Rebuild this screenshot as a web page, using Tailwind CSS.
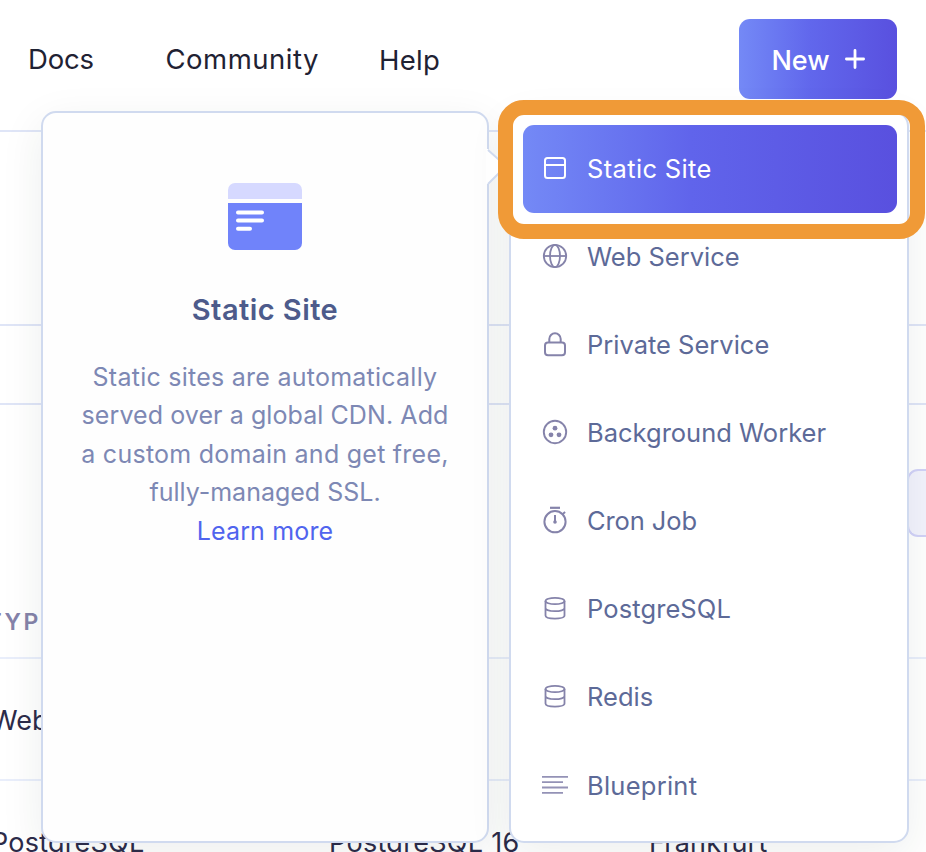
<!DOCTYPE html>
<html lang="en">
<head>
<meta charset="utf-8">
<title>Dashboard</title>
<script src="https://cdn.jsdelivr.net/npm/@tailwindcss/browser@4"></script>
</head>
<body class="relative w-[926px] h-[852px] overflow-hidden bg-white font-[Inter,sans-serif] text-[#1f2233]">
  <!-- Page behind the menu -->
  <header class="flex h-[132px] items-start border-b-2 border-[#dfe5f7] pl-7 pt-[19px]">
    <nav class="flex h-20 items-center pt-[2px] text-[27.5px] whitespace-nowrap">
      <a class="w-[137.5px] tracking-[-0.2px]">Docs</a>
      <a class="w-[213.5px] tracking-[0.5px]">Community</a>
      <a class="pt-[2px] tracking-[0.3px]">Help</a>
    </nav>
    <button class="ml-auto mr-[29px] flex h-20 w-[158px] items-center gap-[15px] rounded-[11px] bg-linear-to-r from-[#7489f6] via-[#6167ec] via-45% to-[#5950df] pl-8 pt-[4px] text-[27px] font-medium text-white">
      <span class="w-[59px] whitespace-nowrap">New</span>
      <svg class="-mt-[5px] size-5" viewBox="0 0 20 20" fill="none" stroke="currentColor" stroke-width="2.8" stroke-linecap="round"><path d="M10 1.4v17.2M1.4 10h17.2"/></svg>
    </button>
  </header>
  <main class="h-[720px] overflow-hidden">
    <div class="h-[194px] border-b-2 border-[#dfe5f7]"></div>
    <div class="h-[79px] border-b-2 border-[#dfe5f7]"></div>
    <div class="flex h-[180px] items-start justify-end pt-16">
      <div class="h-[68px] w-[19px] rounded-l-[11px] border-2 border-r-0 border-[#d2d2f8] bg-[#f3f3fd]"></div>
    </div>
    <div class="flex h-[74px] items-center border-b-2 border-[#e9eefb] pt-[3px] text-[#8583aa] text-[23px] font-semibold tracking-[2.6px]"><span class="-ml-[13.5px]">TYPE</span></div>
    <div class="flex h-[122px] items-center border-b-2 border-[#e9eefb] text-[27px] text-[#2c2b4a]"><span class="-ml-[9px] pt-1">Web Service</span></div>
    <div class="flex h-[122px] items-center text-[27px] text-[#2c2b4a] whitespace-nowrap">
      <span class="-ml-[9px] w-[338px] pt-[3px] tracking-[0.2px]">PostgreSQL</span><span class="w-[320px] pt-[3px] tracking-[0.3px]">PostgreSQL 16</span><span class="pt-[3px] tracking-[0.2px]">Frankfurt</span>
    </div>
  </main>

  <!-- Description flyout -->
  <section class="absolute left-[41px] top-[111px] flex h-[732px] w-[448px] flex-col items-center rounded-[15px] border-2 border-[#d0daef] bg-[#fefefe] pt-[70px] text-center shadow-[0_12px_44px_rgba(30,45,40,0.08)]">
    <svg class="h-[67px] w-[74px]" viewBox="0 0 74 67"><path fill="#d6d9ff" d="M0 16V7a7 7 0 0 1 7-7h60a7 7 0 0 1 7 7v9z"/><path fill="#7083fa" d="M0 20h74v40a7 7 0 0 1-7 7H7a7 7 0 0 1-7-7z"/><path stroke="#fff" stroke-width="4" stroke-linecap="round" d="M10 29.4h24M10 37.6h24M10 45.8h12"/></svg>
    <h2 class="mt-[42px] text-[29px] leading-9 font-semibold tracking-[0.45px] text-[#4d5b8b]">Static Site</h2>
    <p class="mt-[29.5px] text-[25px] leading-[38.5px] text-[#7d88b4] whitespace-nowrap"><span class="tracking-[0.25px]">Static sites are automatically</span><br><span class="tracking-[0.08px]">served over a global CDN. Add</span><br><span class="tracking-[0.25px]">a custom domain and get free,</span><br>fully-managed SSL.<br><a class="tracking-[0.15px] text-[#5064ee]">Learn more</a></p>
  </section>

  <!-- New menu -->
  <ul class="absolute left-[509px] top-[111px] w-[400px] rounded-[15px] border-2 border-[#d0daef] bg-white py-3 pl-3 pr-[10px] text-[25.5px] text-[#5d6a98] shadow-[0_12px_44px_rgba(30,45,40,0.08)] whitespace-nowrap">
    <li class="flex h-[88px] items-center gap-[17px] rounded-[11px] bg-linear-to-r from-[#7489f6] via-[#6064eb] via-45% to-[#5950df] pl-[17px] text-white">
      <svg class="-mt-0.5 size-[30px]" viewBox="0 0 30 30" fill="none" stroke="currentColor" stroke-width="2"><rect x="5" y="5" width="20" height="20" rx="2.5"/><path d="M5 12h20"/></svg><span class="tracking-[0.35px]">Static Site</span>
    </li>
    <li class="flex h-[88px] items-center gap-[17px] pl-[17px]">
      <svg class="-mt-0.5 size-[30px] text-[#8583aa]" viewBox="0 0 30 30" fill="none" stroke="currentColor" stroke-width="1.8"><circle cx="15" cy="15" r="11.2"/><ellipse cx="15" cy="15" rx="5" ry="11.2"/><path d="M3.8 15h22.4"/></svg><span>Web Service</span>
    </li>
    <li class="flex h-[88px] items-center gap-[17px] pl-[17px]">
      <svg class="-mt-0.5 size-[30px] text-[#8583aa]" viewBox="0 0 30 30" fill="none" stroke="currentColor" stroke-width="2"><rect x="5" y="13.5" width="20" height="12.7" rx="3"/><path d="M9.3 13.5V10a5.7 5.7 0 0 1 11.4 0v3.5"/></svg><span>Private Service</span>
    </li>
    <li class="flex h-[88px] items-center gap-[17px] pl-[17px]">
      <svg class="-mt-0.5 size-[30px] text-[#8583aa]" viewBox="0 0 30 30" fill="none" stroke="currentColor" stroke-width="1.9"><circle cx="15" cy="15" r="11.2"/><g fill="currentColor" stroke="none"><circle cx="15" cy="11.2" r="2.4"/><circle cx="11" cy="17.8" r="2.4"/><circle cx="19" cy="17.8" r="2.4"/></g></svg><span>Background Worker</span>
    </li>
    <li class="flex h-[88px] items-center gap-[17px] pl-[17px]">
      <svg class="-mt-0.5 size-[30px] text-[#8583aa]" viewBox="0 0 30 30" fill="none" stroke="currentColor" stroke-width="2"><circle cx="15" cy="16.7" r="10.6"/><path d="M10 2.8h10" stroke-width="2.2"/><path d="M22.5 9.2l2.6-2.2M15 10v6"/><circle cx="15" cy="17" r="1.8" fill="currentColor" stroke="none"/></svg><span class="tracking-[-0.1px]">Cron Job</span>
    </li>
    <li class="flex h-[88px] items-center gap-[17px] pl-[17px]">
      <svg class="-mt-0.5 size-[30px] text-[#8583aa]" viewBox="0 0 30 30" fill="none" stroke="currentColor" stroke-width="1.8"><ellipse cx="15" cy="8" rx="9.5" ry="3.2"/><path d="M5.5 8v14.5c0 1.9 4.2 3.1 9.5 3.1s9.5-1.2 9.5-3.1V8M5.5 15c0 1.9 4.2 3.2 9.5 3.2s9.5-1.3 9.5-3.2"/></svg><span class="tracking-[0.1px]">PostgreSQL</span>
    </li>
    <li class="flex h-[88px] items-center gap-[17px] pl-[17px]">
      <svg class="-mt-0.5 size-[30px] text-[#8583aa]" viewBox="0 0 30 30" fill="none" stroke="currentColor" stroke-width="1.8"><ellipse cx="15" cy="8" rx="9.5" ry="3.2"/><path d="M5.5 8v14.5c0 1.9 4.2 3.1 9.5 3.1s9.5-1.2 9.5-3.1V8M5.5 15c0 1.9 4.2 3.2 9.5 3.2s9.5-1.3 9.5-3.2"/></svg><span>Redis</span>
    </li>
    <li class="flex h-[88px] items-center gap-[17px] pl-[17px]">
      <svg class="mt-px size-[30px] text-[#9492b6]" viewBox="0 0 30 30" fill="none" stroke="currentColor" stroke-width="1.8"><path d="M2 5.8h26M2 11.2h21M2 16.5h26M2 21.8h21"/></svg><span class="pt-0.5 tracking-[0.25px]">Blueprint</span>
    </li>
  </ul>

  <svg class="absolute left-[486px] top-[149px] h-9 w-5" viewBox="0 0 20 36"><path d="M0 0h2l18 17L2 35H0z" fill="#fefefe"/><path d="M2 1l18 16L2 35" fill="none" stroke="#d0daef" stroke-width="2"/></svg>
  <!-- Highlight ring -->
  <div class="absolute left-[498.4px] top-[100px] h-[139.4px] w-[426.4px] rounded-[26px] border-[15px] border-[#f09a37]"></div>
</body>
</html>
